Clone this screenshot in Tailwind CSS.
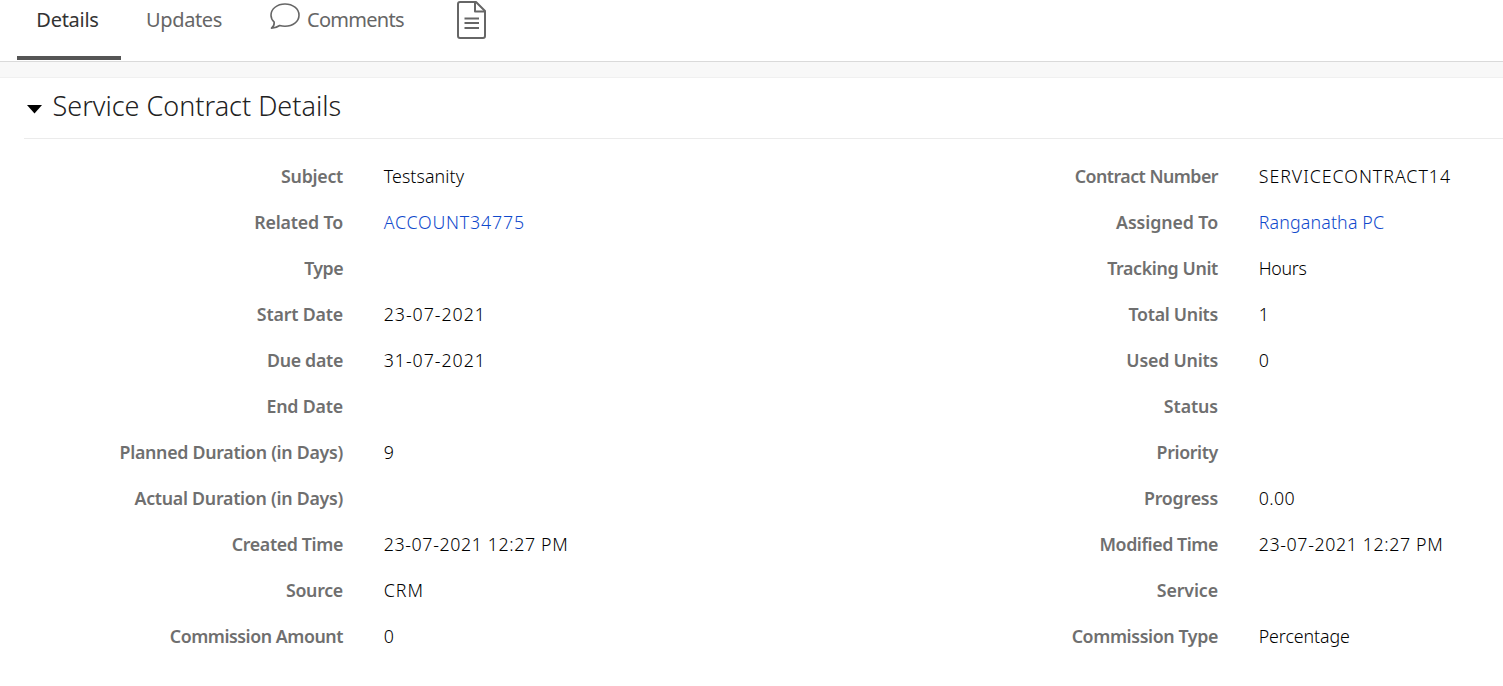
<!DOCTYPE html>
<html lang="en">
<head>
<meta charset="utf-8">
<title>Service Contract Details</title>
<script src="https://cdn.jsdelivr.net/npm/@tailwindcss/browser@4"></script>
</head>
<body class="h-[686px] overflow-hidden bg-white font-['Noto_Sans','Open_Sans',sans-serif]">
<nav class="flex h-[62px] items-start border-b border-[#dadada] pl-[17px] text-[20px] text-[#666]">
  <div class="flex h-[60px] w-[104px] justify-center border-b-4 border-[#555] pr-[3px] leading-[40px] tracking-[-0.27px] text-[#333]">Details</div>
  <div class="ml-[24px] w-[78px] text-center leading-[40px] tracking-[-0.38px]">Updates</div>
  <div class="ml-[45px] flex leading-[40px]">
    <svg class="mt-[2px] ml-px h-[30px] w-[32px] shrink-0" viewBox="0 0 32 30" fill="none" stroke="#666" stroke-width="1.6" stroke-linejoin="round"><path d="M5.2 20.2C3.1 18.3 2 16 2 13.3C2 6.9 8.1 2 16 2s14 4.9 14 11.2s-6.200 11-14 11c-2 0-3.700-.200-5.300-.700C8.300 25.200 5.700 26.100 2.500 26.200C4.500 24.600 5.400 22.500 5.200 20.200Z"/></svg>
    <span class="ml-[6px] tracking-[-0.71px]">Comments</span>
  </div>
  <svg class="ml-[52px] h-[40px] w-[32px] shrink-0" viewBox="0 0 32 40" fill="none" stroke="#666" stroke-width="2" stroke-linejoin="round"><path d="M4 2H20L29 11V36a2 2 0 0 1-2 2H4a2 2 0 0 1-2-2V4a2 2 0 0 1 2-2Z"/><path d="M19 2V11.500H29M8.500 18.500H23M8.500 23H23M8.500 28H23"/></svg>
</nav>
<div class="h-4 border-b border-[#f0f0f0] bg-[#f8f8f8]"></div>
<main>
  <header class="ml-[24px] flex h-[61px] items-start border-b border-[#ebebeb]">
    <svg class="mt-[27px] ml-[3px] h-[9px] w-[15px]" viewBox="0 0 15 9"><path d="M0 0H15L7.500 8.500Z" fill="#000"/></svg>
    <h1 class="ml-[10.5px] text-[27px] leading-[56px] font-light text-[#222]">Service Contract Details</h1>
  </header>
  <div id="fields" class="mt-[14px] grid grid-cols-[875px_1fr]"></div>
</main>
<script>
// label, label tracking, value, value tracking, link
const fields = [
  ["Subject",-.27,"Testsanity",.11], ["Contract Number",-.53,"SERVICECONTRACT14",.98],
  ["Related To",-.17,"ACCOUNT34775",.8,1], ["Assigned To",-.1,"Ranganatha PC",.16,1],
  ["Type",-.55,"",0], ["Tracking Unit",-.35,"Hours",-.3],
  ["Start Date",-.18,"23-07-2021",.95], ["Total Units",-.3,"1",0],
  ["Due date",-.31,"31-07-2021",.95], ["Used Units",-.22,"0",0],
  ["End Date",-.19,"",0], ["Status",-.1,"",0],
  ["Planned Duration (in Days)",-.29,"9",0], ["Priority",-.37,"",0],
  ["Actual Duration (in Days)",-.27,"",0], ["Progress",-.2,"0.00",.4],
  ["Created Time",-.36,"23-07-2021 12:27 PM",.62], ["Modified Time",-.43,"23-07-2021 12:27 PM",.62],
  ["Source",-.28,"CRM",1], ["Service",-.1,"",0],
  ["Commission Amount",-.45,"0",0], ["Commission Type",-.38,"Percentage",-.08]
];
document.getElementById("fields").innerHTML = fields.map(([label, lt, value, vt, link]) => `
  <div class="flex h-[46px] items-center text-[17.8px] whitespace-nowrap">
    <div class="w-[343px] shrink-0 text-right font-semibold text-[#6f6f6f]"><span style="letter-spacing:${lt}px">${label}</span></div>
    <div class="ml-[40.7px] font-light ${link ? "text-[#0f49cc]" : "text-black"}" style="letter-spacing:${vt}px">${value}</div>
  </div>`).join("");
</script>
</body>
</html>
